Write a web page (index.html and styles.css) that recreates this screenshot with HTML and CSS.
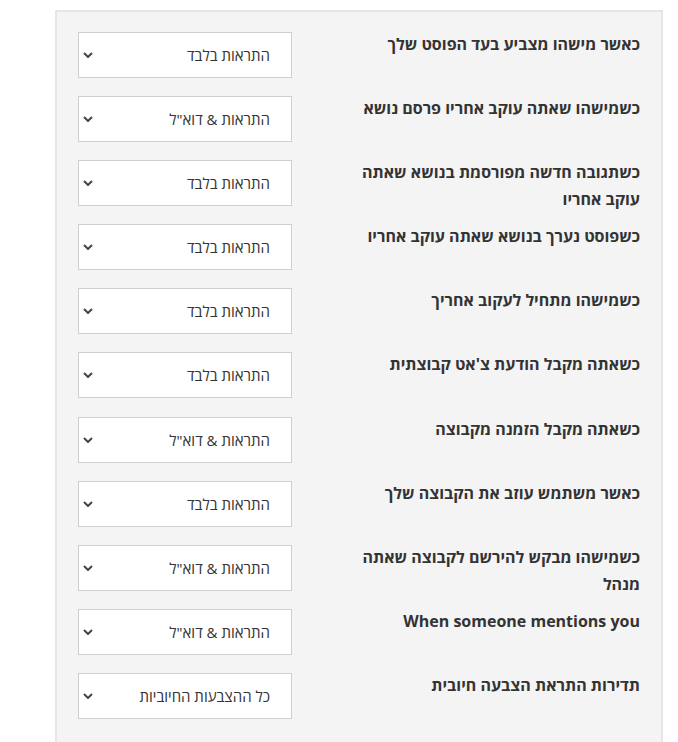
FILE: index.html
```html
<!DOCTYPE html>
<html lang="he" dir="rtl">
<head>
<meta charset="utf-8">
<link rel="stylesheet" href="styles.css">
</head>
<body>
<div class="panel">
  <div class="row"><div class="label">כאשר מישהו מצביע בעד הפוסט שלך</div><div class="select"><span class="val">התראות בלבד</span><svg class="chev" viewBox="0 0 10 6" width="10" height="6"><path d="M1 1 L5 5 L9 1" fill="none" stroke="#444" stroke-width="2"/></svg></div></div>
  <div class="row"><div class="label">כשמישהו שאתה עוקב אחריו פרסם נושא</div><div class="select"><span class="val">התראות &amp; דוא"ל</span><svg class="chev" viewBox="0 0 10 6" width="10" height="6"><path d="M1 1 L5 5 L9 1" fill="none" stroke="#444" stroke-width="2"/></svg></div></div>
  <div class="row"><div class="label">כשתגובה חדשה מפורסמת בנושא שאתה עוקב אחריו</div><div class="select"><span class="val">התראות בלבד</span><svg class="chev" viewBox="0 0 10 6" width="10" height="6"><path d="M1 1 L5 5 L9 1" fill="none" stroke="#444" stroke-width="2"/></svg></div></div>
  <div class="row"><div class="label">כשפוסט נערך בנושא שאתה עוקב אחריו</div><div class="select"><span class="val">התראות בלבד</span><svg class="chev" viewBox="0 0 10 6" width="10" height="6"><path d="M1 1 L5 5 L9 1" fill="none" stroke="#444" stroke-width="2"/></svg></div></div>
  <div class="row"><div class="label">כשמישהו מתחיל לעקוב אחריך</div><div class="select"><span class="val">התראות בלבד</span><svg class="chev" viewBox="0 0 10 6" width="10" height="6"><path d="M1 1 L5 5 L9 1" fill="none" stroke="#444" stroke-width="2"/></svg></div></div>
  <div class="row"><div class="label">כשאתה מקבל הודעת צ'אט קבוצתית</div><div class="select"><span class="val">התראות בלבד</span><svg class="chev" viewBox="0 0 10 6" width="10" height="6"><path d="M1 1 L5 5 L9 1" fill="none" stroke="#444" stroke-width="2"/></svg></div></div>
  <div class="row"><div class="label">כשאתה מקבל הזמנה מקבוצה</div><div class="select"><span class="val">התראות &amp; דוא"ל</span><svg class="chev" viewBox="0 0 10 6" width="10" height="6"><path d="M1 1 L5 5 L9 1" fill="none" stroke="#444" stroke-width="2"/></svg></div></div>
  <div class="row"><div class="label">כאשר משתמש עוזב את הקבוצה שלך</div><div class="select"><span class="val">התראות בלבד</span><svg class="chev" viewBox="0 0 10 6" width="10" height="6"><path d="M1 1 L5 5 L9 1" fill="none" stroke="#444" stroke-width="2"/></svg></div></div>
  <div class="row"><div class="label">כשמישהו מבקש להירשם לקבוצה שאתה מנהל</div><div class="select"><span class="val">התראות &amp; דוא"ל</span><svg class="chev" viewBox="0 0 10 6" width="10" height="6"><path d="M1 1 L5 5 L9 1" fill="none" stroke="#444" stroke-width="2"/></svg></div></div>
  <div class="row"><div class="label">When someone mentions you</div><div class="select"><span class="val">התראות &amp; דוא"ל</span><svg class="chev" viewBox="0 0 10 6" width="10" height="6"><path d="M1 1 L5 5 L9 1" fill="none" stroke="#444" stroke-width="2"/></svg></div></div>
  <div class="row"><div class="label">תדירות התראת הצבעה חיובית</div><div class="select"><span class="val">כל ההצבעות החיוביות</span><svg class="chev" viewBox="0 0 10 6" width="10" height="6"><path d="M1 1 L5 5 L9 1" fill="none" stroke="#444" stroke-width="2"/></svg></div></div>
</div>
</body>
</html>
```
FILE: styles.css
```css
html, body {
  margin: 0;
  padding: 0;
  background: #ffffff;
}
body {
  font-family: "Open Sans", "Noto Sans", "DejaVu Sans", sans-serif;
  color: #333;
  padding: 10px 0 0 0;
}
.panel {
  direction: rtl;
  margin-right: 15px;
  width: 608px;
  box-sizing: border-box;
  background: #f4f4f4;
  border: 2px solid #e6e6e6;
  padding: 20px 21px 40px 21px;
  display: flex;
  flex-direction: column;
  gap: 18.1px;
}
.row {
  display: grid;
  grid-template-columns: 1fr 1fr;
  align-items: start;
  height: 46px;
}
.label {
  font-size: 16px;
  font-weight: 700;
  line-height: 27px;
  color: #333;
  text-align: right;
  margin-top: -1px;
}
.select {
  justify-self: end;
  width: 214px;
  height: 46px;
  box-sizing: border-box;
  background: #fff;
  border: 1px solid #cfcfcf;
  display: flex;
  align-items: center;
  justify-content: space-between;
  padding: 0 21px 0 4px;
}
.val {
  font-size: 15px;
  color: #333;
}
.chev {
  display: block;
}
```
